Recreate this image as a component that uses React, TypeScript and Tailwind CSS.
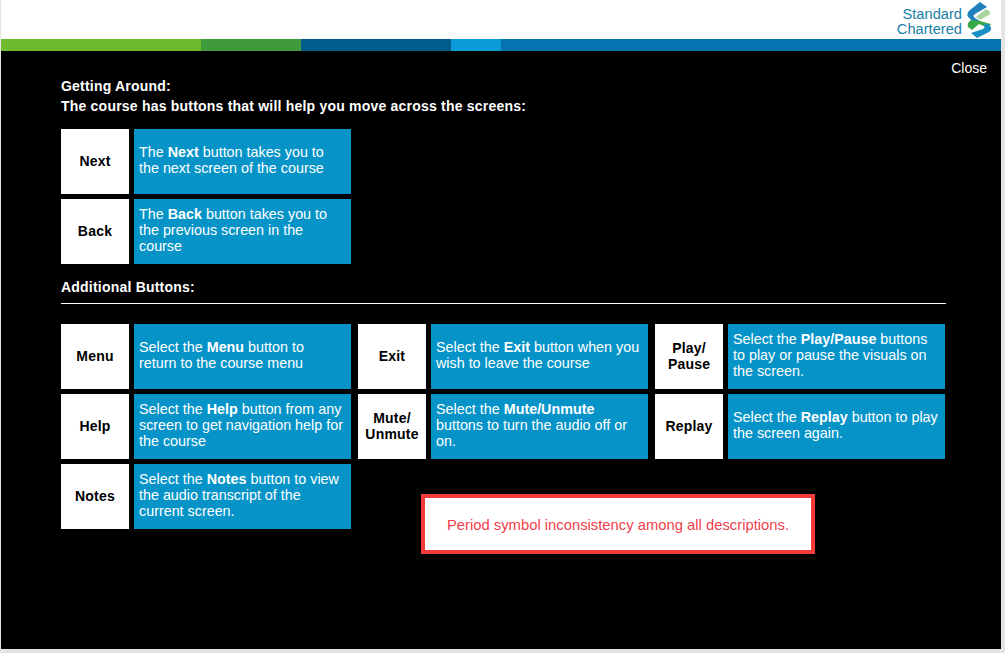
const font = "font-['Liberation_Sans',Arial,sans-serif]"

type Item = { label: string[]; before: string; bold: string; after: string }

const topItems: Item[] = [
  { label: ["Next"], before: "The ", bold: "Next", after: " button takes you to the next screen of the course" },
  { label: ["Back"], before: "The ", bold: "Back", after: " button takes you to the previous screen in the course" },
]

const extraItems: Item[] = [
  { label: ["Menu"], before: "Select the ", bold: "Menu", after: " button to return to the course menu" },
  { label: ["Exit"], before: "Select the ", bold: "Exit", after: " button when you wish to leave the course" },
  { label: ["Play/", "Pause"], before: "Select the ", bold: "Play/Pause", after: " buttons to play or pause the visuals on the screen." },
  { label: ["Help"], before: "Select the ", bold: "Help", after: " button from any screen to get navigation help for the course" },
  { label: ["Mute/", "Unmute"], before: "Select the ", bold: "Mute/Unmute", after: " buttons to turn the audio off or on." },
  { label: ["Replay"], before: "Select the ", bold: "Replay", after: " button to play the screen again." },
  { label: ["Notes"], before: "Select the ", bold: "Notes", after: " button to view the audio transcript of the current screen." },
]

function Row({ item }: { item: Item }) {
  return (
    <div className="flex h-[65px] w-[290px] gap-[5px]">
      <div className="flex w-[68px] shrink-0 flex-col items-center justify-center bg-white pb-[2px] text-[14px] leading-[16px] font-bold tracking-[0.2px] text-black">
        {item.label.map((line) => (
          <span key={line}>{line}</span>
        ))}
      </div>
      <div className="flex flex-1 items-center bg-[#0694c8] pr-[7px] pb-[3px] pl-[5px] text-[14.33px] leading-[16px] text-white">
        <p>
          {item.before}
          <b>{item.bold}</b>
          {item.after}
        </p>
      </div>
    </div>
  )
}

function Logo() {
  return (
    <div className="mr-[9px] flex items-center gap-[5px]">
      <div className="pt-[4px] text-right text-[14.67px] leading-[15px] text-[#1a7fa8]">
        <div>Standard</div>
        <div>Chartered</div>
      </div>
      <svg width="25" height="36" viewBox="0 0 25 36">
        <path d="M13 0 L20 5 L8 12 C6 13.500 6 14.500 8 16 L14 20 L8 21 L2 16 C-0.500 13.500 0 10.500 3 8 Z" fill="#1f80bb" />
        <path d="M19 7 C23 9 24 11 22 13 L13 18 L9 15 Z" fill="#a8d5a0" />
        <path d="M1 25 C0 22 1 20 4 18 L13 19 L24 22 L21 26 L12 22 L5 28 Z" fill="#38a84a" />
        <path d="M21 22 C25 25 25 28 22 30 L10 36 L4 31 L16 27 C18 26 18 24 16 23 Z" fill="#1c8fc4" />
      </svg>
    </div>
  )
}

export default function App() {
  return (
    <div className={`${font} flex h-[653px] w-[1005px] flex-col bg-[#e4e4e4]`}>
      <div className="ml-[1px] flex h-[649px] w-[1000px] flex-col bg-black">
        <header className="flex h-[39px] items-start justify-end bg-white pt-[2px]">
          <Logo />
        </header>
        <div className="flex h-[12px]">
          <div className="w-[200px] bg-[#6ebb2d]" />
          <div className="w-[100px] bg-[#3f9a3a]" />
          <div className="w-[150px] bg-[#005c8a]" />
          <div className="w-[50px] bg-[#0a9bd8]" />
          <div className="flex-1 bg-[#0473b0]" />
        </div>
        <main className="relative flex-1 pl-[60px] text-white">
          <div className="absolute top-[9px] right-[14px] text-[14px] leading-[16px]">Close</div>
          <h1 className="pt-[25px] text-[14px] leading-[20px] font-bold tracking-[0.21px]">
            Getting Around:
            <br />
            The course has buttons that will help you move across the screens:
          </h1>
          <div className="mt-[13px] flex flex-col gap-[5px]">
            {topItems.map((item) => (
              <Row key={item.bold} item={item} />
            ))}
          </div>
          <h2 className="mt-[14px] text-[14px] leading-[18px] font-bold tracking-[0.21px]">Additional Buttons:</h2>
          <div className="mt-[7px] h-px w-[885px] bg-white" />
          <div className="mt-[20px] grid w-[884px] grid-cols-[290px_290px_290px] gap-x-[7px] gap-y-[5px]">
            {extraItems.map((item) => (
              <Row key={item.bold} item={item} />
            ))}
          </div>
          <div className="absolute top-[443px] left-[420px] flex h-[60px] w-[394px] items-center justify-center border-4 border-[#f53a3a] bg-white pt-[2px] text-[14.8px] text-[#f0404c]">
            Period symbol inconsistency among all descriptions.
          </div>
        </main>
      </div>
    </div>
  )
}
